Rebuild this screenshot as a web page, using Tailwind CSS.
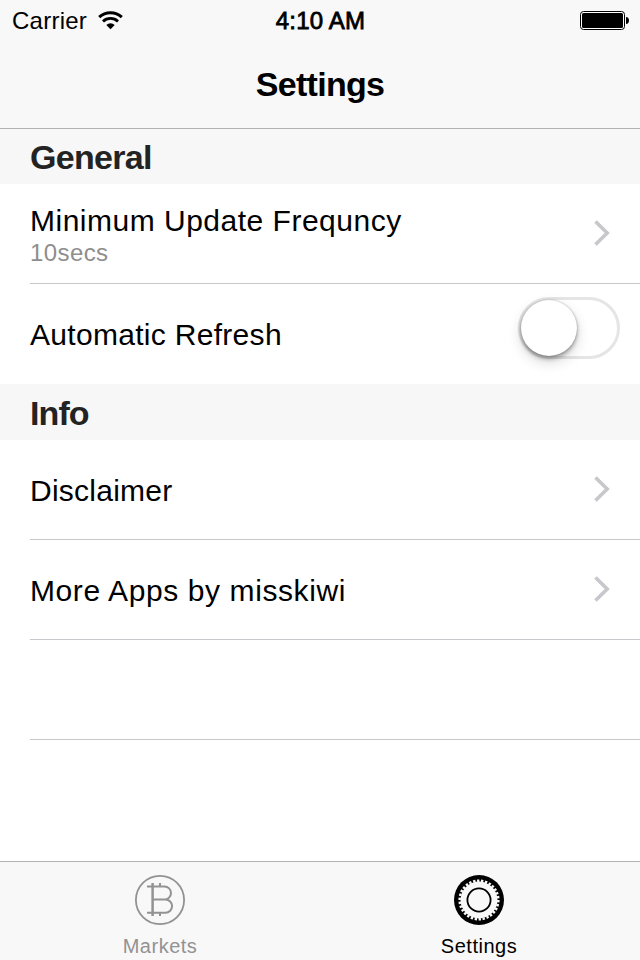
<!DOCTYPE html>
<html lang="en">
<head>
    <meta charset="UTF-8">
    <title>Settings</title>
    <meta name="viewport" content="width=device-width, initial-scale=1.0">
    <script src="https://cdn.jsdelivr.net/npm/@tailwindcss/browser@4"></script>
</head>
<body class="flex h-[960px] w-[640px] flex-col overflow-hidden bg-white font-['Liberation_Sans',sans-serif] text-black">
    <!-- Status bar + title -->
    <header class="h-[129px] shrink-0 border-b border-[#b2b2b2] bg-[#f8f8f8]">
        <div class="grid h-10 grid-cols-3 items-center pl-3 pr-[11px]">
            <div class="flex items-center gap-[11px]">
                <span class="pt-0.5 text-2xl tracking-[0.25px]">Carrier</span>
                <svg class="h-[19px] w-[25px]" viewBox="0 0 25 19" fill="none" stroke="#000">
                    <path d="M1.2 6.2a16.3 16.3 0 0 1 22.6 0" stroke-width="3"/>
                    <path d="M5 10.4a11 11 0 0 1 15 0" stroke-width="2.8"/>
                    <path d="M12.5 18.3 8.3 14a6.2 6.2 0 0 1 8.4 0z" fill="#000" stroke="none"/>
                </svg>
            </div>
            <span class="pt-0.5 text-center text-2xl tracking-[0.2px] [-webkit-text-stroke:0.8px_#000]">4:10 AM</span>
            <svg class="h-5 w-[49px] justify-self-end" viewBox="0 0 49 20">
                <rect x="0.5" y="1.5" width="44" height="18" rx="3" fill="#fff" stroke="#000"/>
                <rect x="2" y="3" width="41" height="15" rx="1.5"/>
                <path d="M46 7c4 0 4 7 0 7z"/>
            </svg>
        </div>
        <h1 class="pt-6 text-center text-[34px] leading-10 font-bold tracking-[-0.7px]">Settings</h1>
    </header>

    <main class="flex-1">
        <h2 class="flex h-[55px] items-center bg-[#f7f7f7] pt-0.5 pl-[30px] text-[34px] font-bold tracking-[-0.7px] text-[#232323]">General</h2>
        <div class="ml-[30px] flex h-[100px] items-center justify-between border-b border-[#c8c7cc] pr-[30px]">
            <div class="pt-0.5">
                <p class="text-[30px] leading-9 tracking-[0.5px]">Minimum Update Frequncy</p>
                <p class="text-2xl leading-7 tracking-[0.4px] text-[#8e8e8e]">10secs</p>
            </div>
            <svg class="mb-0.5 h-[26px] w-4" viewBox="0 0 16 26" fill="none" stroke="#c7c7cc" stroke-width="3.6"><path d="M1.5 1.5 13.2 13 1.5 24.5"/></svg>
        </div>
        <div class="ml-[30px] flex h-[100px] items-center justify-between pr-5">
            <p class="pt-px text-[30px] tracking-[0.3px]">Automatic Refresh</p>
            <div class="mb-3 h-[62px] w-[102px] rounded-full border-3 border-[#e5e5e5]">
                <div class="size-14 rounded-full bg-white shadow-[0_6px_14px_rgba(0,0,0,0.16),0_3px_4px_rgba(0,0,0,0.3),0_0_2px_rgba(0,0,0,0.3)]"></div>
            </div>
        </div>

        <h2 class="flex h-14 items-center bg-[#f7f7f7] pt-0.5 pl-[30px] text-[34px] font-bold tracking-[-0.9px] text-[#232323]">Info</h2>
        <div class="ml-[30px] flex h-[100px] items-center justify-between border-b border-[#c8c7cc] pr-[30px]">
            <p class="pt-0.5 text-[30px] tracking-[0.25px]">Disclaimer</p>
            <svg class="mb-0.5 h-[26px] w-4" viewBox="0 0 16 26" fill="none" stroke="#c7c7cc" stroke-width="3.6"><path d="M1.5 1.5 13.2 13 1.5 24.5"/></svg>
        </div>
        <div class="ml-[30px] flex h-[100px] items-center justify-between border-b border-[#c8c7cc] pr-[30px]">
            <p class="pt-0.5 text-[30px] tracking-[0.6px]">More Apps by misskiwi</p>
            <svg class="mb-0.5 h-[26px] w-4" viewBox="0 0 16 26" fill="none" stroke="#c7c7cc" stroke-width="3.6"><path d="M1.5 1.5 13.2 13 1.5 24.5"/></svg>
        </div>
        <div class="ml-[30px] h-[100px] border-b border-[#c8c7cc]"></div>
    </main>

    <!-- Tab bar -->
    <nav class="grid h-[99px] shrink-0 grid-cols-2 border-t border-[#b2b2b2] bg-[#f8f8f8]">
        <a class="flex flex-col items-center pt-[13px] text-[#929292]">
            <svg class="size-[50px]" viewBox="0 0 50 50" fill="none" stroke="#929292" stroke-width="2">
                <circle cx="25" cy="25" r="24.1" stroke-width="1.8"/>
                <path d="M17.6 8v33" stroke-width="2.5"/>
                <path d="M25 8v3M25 38v3"/>
                <path d="M12 11.5h17.5a6.5 6.5 0 0 1 0 13H18M29.5 24.5h1a6.6 6.6 0 0 1 0 13.2H12"/>
            </svg>
            <span class="pt-[9px] text-xl leading-6 tracking-[0.5px]">Markets</span>
        </a>
        <a class="flex flex-col items-center pt-[13px] pr-0.5">
            <svg class="size-[50px]" viewBox="0 0 50 50" fill="none">
                <circle cx="25" cy="25" r="25" fill="#000"/>
                <circle cx="25" cy="25" r="18.5" fill="#f8f8f8"/>
                <circle cx="25" cy="25" r="19.3" stroke="#f8f8f8" stroke-width="2.6" pathLength="60" stroke-dasharray="1.2 0.8"/>
                <circle cx="25" cy="25" r="11.6" stroke="#000" stroke-width="1.8"/>
            </svg>
            <span class="pt-[9px] text-xl leading-6 tracking-[0.5px]">Settings</span>
        </a>
    </nav>
</body>
</html>
